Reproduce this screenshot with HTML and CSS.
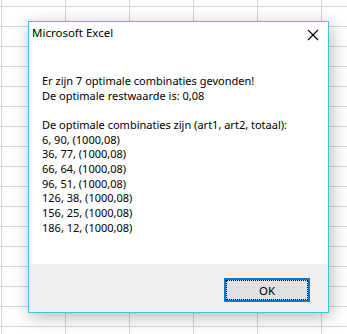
FILE: index.html
```html
<!DOCTYPE html>
<html lang="nl">
<head>
    <meta charset="UTF-8">
    <meta name="viewport" content="width=device-width, initial-scale=1.0">
    <title>Microsoft Excel</title>
    <link rel="stylesheet" href="styles.css">
</head>
<body>
    <div class="dialog">
        <div class="titlebar">
            <span class="title">Microsoft Excel</span>
            <svg class="close" width="12" height="12" viewBox="0 0 12 12">
                <path d="M1 1 L11 11 M11 1 L1 11" stroke="#000" stroke-width="1.1" fill="none"/>
            </svg>
        </div>
        <div class="message">
            <p>Er zijn 7 optimale combinaties gevonden!<br>De optimale restwaarde is: 0,08</p>
            <p>De optimale combinaties zijn (art1, art2, totaal):<br>
            6, 90, (1000,08)<br>
            36, 77, (1000,08)<br>
            66, 64, (1000,08)<br>
            96, 51, (1000,08)<br>
            126, 38, (1000,08)<br>
            156, 25, (1000,08)<br>
            186, 12, (1000,08)</p>
        </div>
        <div class="footer">
            <button class="ok-btn">OK</button>
        </div>
    </div>
</body>
</html>
```

FILE: styles.css
```css
body {
    margin: 0;
    padding: 21px 0 0 28px;
    height: 334px;
    box-sizing: border-box;
    font-family: "Noto Sans", "Open Sans", sans-serif;
    font-size: 11px;
    color: #000;
    background-color: #fff;
    background-image:
        linear-gradient(to right, #d4d4d4 1px, transparent 1px),
        linear-gradient(to bottom, #d4d4d4 1px, transparent 1px);
    background-size: 64px 20px;
    background-position: 1px 6px;
    overflow: hidden;
}

.dialog {
    width: 299px;
    height: 290px;
    border: 1px solid #43bfe0;
    background-color: #fff;
    display: flex;
    flex-direction: column;
    box-shadow: 2px 4px 16px rgba(0, 0, 0, 0.28);
}

.titlebar {
    height: 30px;
    box-sizing: border-box;
    padding: 3px 9px 0 3px;
    display: flex;
    justify-content: space-between;
    align-items: flex-start;
    line-height: 16px;
    font-size: 11.5px;
}

.close {
    margin-top: 4px;
}

.message {
    padding: 0 13px;
    margin-top: 22px;
    line-height: 14.67px;
}

.message p {
    margin: 0 0 14.67px 0;
}

.footer {
    margin-top: auto;
    height: 48px;
    box-sizing: border-box;
    background-color: #f0f0f0;
    display: flex;
    justify-content: flex-end;
    align-items: flex-start;
    padding: 14px 18px 0 0;
}

.ok-btn {
    width: 86px;
    height: 24px;
    border: 2px solid #0078d7;
    background-color: #e1e1e1;
    font-family: inherit;
    font-size: 11.5px;
    color: #000;
    padding: 0;
    outline: 1px dotted #000;
    outline-offset: -3px;
}
```
